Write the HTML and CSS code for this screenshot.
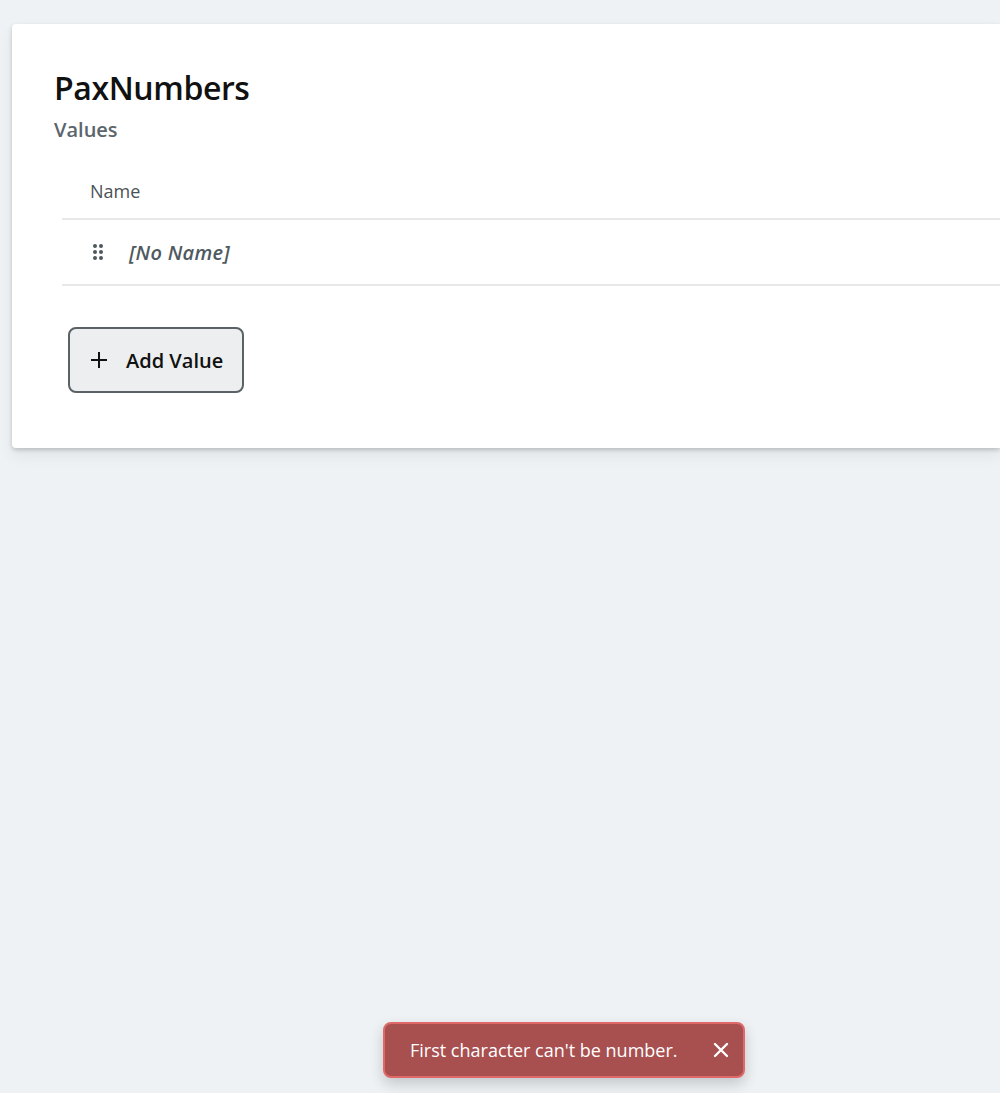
FILE: index.html
```html
<!DOCTYPE html>
<html>
<head>
<meta charset="utf-8">
<link rel="stylesheet" href="styles.css">
</head>
<body>
<div class="page">
  <section class="card">
    <h1 class="title">PaxNumbers</h1>
    <h2 class="subtitle">Values</h2>
    <div class="table">
      <div class="thead">Name</div>
      <div class="row">
        <svg class="drag" width="12" height="18" viewBox="0 0 12 18">
          <circle cx="3" cy="3" r="2"/><circle cx="9" cy="3" r="2"/>
          <circle cx="3" cy="9" r="2"/><circle cx="9" cy="9" r="2"/>
          <circle cx="3" cy="15" r="2"/><circle cx="9" cy="15" r="2"/>
        </svg>
        <span class="noname">[No Name]</span>
      </div>
    </div>
    <button class="add">
      <svg width="18" height="18" viewBox="0 0 18 18"><path d="M9 1v16M1 9h16" stroke="#111" stroke-width="2"/></svg>
      <span>Add Value</span>
    </button>
  </section>
</div>
<div class="toast">
  <span>First character can't be number.</span>
  <svg width="16" height="16" viewBox="0 0 16 16"><path d="M2 2l12 12M14 2L2 14" stroke="#fff" stroke-width="2.4" stroke-linecap="round"/></svg>
</div>
</body>
</html>
```
FILE: styles.css
```css
html, body { margin: 0; padding: 0; }
body {
  background: #eef2f5;
  font-family: "Open Sans", "Liberation Sans", sans-serif;
  color: #111;
  width: 1000px;
  height: 1093px;
  overflow: hidden;
  position: relative;
}
.page { padding: 24px 0 0 12px; }
.card {
  background: #fff;
  border-radius: 4px 0 0 4px;
  box-shadow: 0 2px 4px rgba(0,0,0,0.18), 0 8px 16px rgba(0,0,0,0.06);
  padding: 44px 0 55px 42px;
  box-sizing: border-box;
  width: 988px;
}
.title {
  margin: 0;
  font-size: 32px;
  font-weight: 600;
  line-height: 40px;
  letter-spacing: -0.4px;
}
.subtitle {
  margin: 9px 0 0;
  font-size: 20px;
  font-weight: 600;
  color: #5b666c;
  line-height: 26px;
}
.table { margin: 22px 0 0 8px; }
.thead {
  height: 53px;
  line-height: 53px;
  padding-left: 28px;
  font-size: 18px;
  color: #4a5257;
  border-bottom: 2px solid #e6e8e9;
}
.row {
  height: 64px;
  display: flex;
  align-items: center;
  padding-left: 30px;
  border-bottom: 2px solid #e6e8e9;
}
.drag { fill: #50585d; }
.noname {
  margin-left: 25px;
  font-size: 20px;
  font-style: italic;
  font-weight: 600;
  color: #4f5a60;
  letter-spacing: 0.3px;
}
.add {
  margin: 41px 0 0 14px;
  width: 176px;
  height: 66px;
  border: 2px solid #5b6266;
  border-radius: 8px;
  background: #eceeef;
  display: flex;
  align-items: center;
  gap: 18px;
  padding: 0 0 0 20px;
  font-family: inherit;
  font-size: 20px;
  font-weight: 600;
  color: #111;
}
.toast {
  position: absolute;
  left: 383px;
  top: 1022px;
  width: 362px;
  height: 56px;
  box-sizing: border-box;
  background: #a84f4f;
  border: 2px solid #e06868;
  border-radius: 8px;
  box-shadow: 0 6px 14px rgba(0,0,0,0.18);
  display: flex;
  align-items: center;
  justify-content: space-between;
  padding: 0 14px 0 25px;
  color: #fff;
  font-size: 18px;
}
```
